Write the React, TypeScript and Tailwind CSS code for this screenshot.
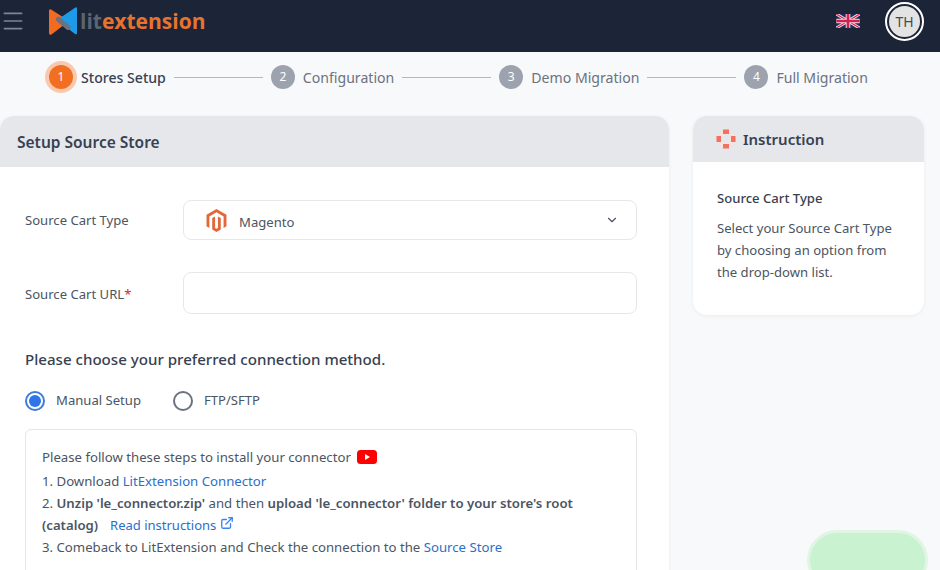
import { ChevronDown, ExternalLink, Menu } from 'lucide-react';
import { SiMagento } from 'react-icons/si';

const steps = ['Configuration', 'Demo Migration', 'Full Migration'];

function Logo() {
  return (
    <div className="flex items-center">
      <svg width="28" height="28" viewBox="0 0 28 28">
        <path d="M0 4 Q0 1.500 2.500 2.800 L20 14 L2.500 27.500 Q0 28.500 0 26 Z" fill="#f26b21" />
        <path d="M28 1.500 Q28 -0.500 26 0.800 L8 13 L26 27 Q28 28 28 26 Z" fill="#1e9be8" />
        <path d="M7 11 Q9 8.500 11 10 L21 19 Q22.500 21 20.500 22.500 Q19 23.500 17.500 22.500 L7.500 14 Q6 12.500 7 11 Z" fill="#6b7280" />
      </svg>
      <span className="ml-[3px] text-[21px] font-bold leading-none font-['Open_Sans',sans-serif]">
        <span className="text-[#5b6471]">lit</span>
        <span className="text-[#e9722e]">extension</span>
      </span>
    </div>
  );
}

function Flag() {
  return (
    <svg width="24" height="14" viewBox="0 0 60 36">
      <rect width="60" height="36" fill="#1d2a5b" />
      <path d="M0 0 L60 36 M60 0 L0 36" stroke="#f3dce3" strokeWidth="8" />
      <path d="M0 0 L60 36 M60 0 L0 36" stroke="#d3214f" strokeWidth="3" />
      <path d="M30 0 V36 M0 18 H60" stroke="#f3dce3" strokeWidth="12" />
      <path d="M30 0 V36 M0 18 H60" stroke="#d3214f" strokeWidth="7" />
    </svg>
  );
}

function LifeRing() {
  return (
    <svg width="20" height="20" viewBox="0 0 20 20">
      <circle cx="10" cy="10" r="7" fill="none" stroke="#f3e3e1" strokeWidth="5" />
      <path d="M7 0.500 H13 V5 H7 Z M7 15 H13 V19.500 H7 Z M0.500 7 H5 V13 H0.500 Z M15 7 H19.500 V13 H15 Z" fill="#f4705f" />
    </svg>
  );
}

export default function App() {
  return (
    <div className="relative h-[570px] w-[940px] overflow-hidden bg-[#f8f9fb] font-['Noto_Sans',sans-serif] text-[#4b5563]">
      <header className="flex h-[52px] items-center justify-between bg-[#1c2538] pb-[10px]">
        <div className="flex items-center">
          <Menu className="h-[26px] w-[26px] text-[#7b8794]" strokeWidth={1.5} />
          <div className="ml-[23px]">
            <Logo />
          </div>
        </div>
        <div className="flex items-center gap-[25px] pr-[16px]">
          <Flag />
          <div className="flex h-[39px] w-[39px] items-center justify-center rounded-full border-[2px] border-white bg-[#1c2538]">
            <div className="flex h-[31px] w-[31px] items-center justify-center rounded-full bg-[#e3e3e3] text-[14px] text-[#444b55]">
              TH
            </div>
          </div>
        </div>
      </header>

      <div className="flex h-[52px] items-center pb-[2px] pl-[49px]">
        <div className="flex h-[24px] w-[24px] items-center justify-center rounded-full bg-[#f26f21] text-[12px] text-white shadow-[0_0_0_4px_#f8c9ae]">
          1
        </div>
        <span className="ml-[8px] pt-[2px] text-[14.1px] font-medium text-[#374151]">Stores Setup</span>
        <div className="ml-[8px] h-px w-[89px] bg-[#b5b8bd]" />
        {steps.map((step, i) => (
          <div key={step} className="flex items-center">
            <div className="ml-[8px] flex h-[24px] w-[24px] items-center justify-center rounded-full bg-[#9ca3af] text-[12px] text-white">
              {i + 2}
            </div>
            <span className="ml-[8px] pt-[2px] text-[14.1px] text-[#6b7280]">{step}</span>
            {i < 2 && <div className="ml-[8px] h-px w-[89px] bg-[#b5b8bd]" />}
          </div>
        ))}
      </div>

      <main className="mt-[12px] flex items-start gap-[24px]">
        <section className="h-[500px] w-[669px] rounded-t-[14px] bg-white shadow-[0_1px_4px_rgba(0,0,0,0.06)]">
          <div className="flex h-[51px] items-center rounded-t-[14px] bg-[#e5e7eb] pl-[17px] pt-[2px] text-[15.5px] font-semibold text-[#374151]">
            Setup Source Store
          </div>
          <div className="px-[25px] pr-[32px] pt-[33px]">
            <div className="flex items-center">
              <label className="w-[158px] pt-[1px] text-[13.1px] text-[#4b5563]">Source Cart Type</label>
              <div className="flex h-[40px] flex-1 items-center rounded-[8px] border border-[#e5e7eb] pl-[21px] pr-[17px]">
                <SiMagento className="h-[25px] w-[23px] text-[#e2673a]" />
                <span className="ml-[11px] pt-[5px] text-[13.1px] text-[#4b5563]">Magento</span>
                <ChevronDown className="ml-auto h-[14px] w-[14px] text-[#4b5563]" />
              </div>
            </div>
            <div className="mt-[32px] flex items-center">
              <label className="w-[158px] pt-[3px] text-[13.1px] text-[#4b5563]">
                Source Cart URL<span className="text-[#dc2626]">*</span>
              </label>
              <div className="h-[42px] flex-1 rounded-[8px] border border-[#e5e7eb]" />
            </div>
            <h3 className="mt-[34px] text-[15.1px] font-medium leading-[22px] text-[#374151]">
              Please choose your preferred connection method.
            </h3>
            <div className="mt-[21px] flex items-center text-[13.1px] text-[#4b5563]">
              <span className="flex h-[20px] w-[20px] items-center justify-center rounded-full border-[2px] border-[#3b7ddd]">
                <span className="h-[12px] w-[12px] rounded-full bg-[#2f74ea]" />
              </span>
              <span className="ml-[11px]">Manual Setup</span>
              <span className="ml-[32px] h-[20px] w-[20px] rounded-full border-[2px] border-[#6b7280]" />
              <span className="ml-[11px]">FTP/SFTP</span>
            </div>
            <div className="mt-[18px] h-[200px] rounded-[6px] border border-[#e5e7eb] px-[16px] pt-[16px] text-[13.2px] leading-[22px] text-[#4b5563]">
              <p className="mb-[2px] flex items-center">
                Please follow these steps to install your connector
                <svg width="20" height="14" viewBox="0 0 20 14" className="ml-[6px]">
                  <rect width="20" height="14" rx="3.500" fill="#f00" />
                  <path d="M8 4 L13 7 L8 10 Z" fill="#fff" />
                </svg>
              </p>
              <p>
                1. Download <a className="text-[#2a6fc9]">LitExtension Connector</a>
              </p>
              <p>
                2. <b className="font-semibold">Unzip 'le_connector.zip'</b> and then{' '}
                <b className="font-semibold">upload 'le_connector' folder to your store's root (catalog)</b>
                <a className="ml-[12px] text-[13px] text-[#2a6fc9]">Read instructions</a>
                <ExternalLink className="ml-[4px] inline h-[14px] w-[14px] -translate-y-[3px] text-[#3b82f6]" strokeWidth={2.25} />
              </p>
              <p>
                3. Comeback to LitExtension and Check the connection to the{' '}
                <a className="text-[#2a6fc9]">Source Store</a>
              </p>
            </div>
          </div>
        </section>

        <aside className="w-[231px] rounded-[14px] bg-white shadow-[0_1px_4px_rgba(0,0,0,0.06)]">
          <div className="flex h-[46px] items-center rounded-t-[14px] bg-[#e5e7eb] pl-[23px] text-[15px] font-semibold text-[#374151]">
            <LifeRing />
            <span className="ml-[7px] pt-[1px]">Instruction</span>
          </div>
          <div className="px-[24px] pb-[32px] pt-[25px] text-[13.1px] leading-[22px] text-[#4b5563]">
            <p className="font-medium text-[#374151]">Source Cart Type</p>
            <p className="mt-[8px]">Select your Source Cart Type by choosing an option from the drop-down list.</p>
          </div>
        </aside>
      </main>

      <div className="absolute left-[807px] top-[530px] h-[60px] w-[121px] rounded-full border-[3px] border-[#e0f6e2] bg-[#c9f2d1]" />
    </div>
  );
}
